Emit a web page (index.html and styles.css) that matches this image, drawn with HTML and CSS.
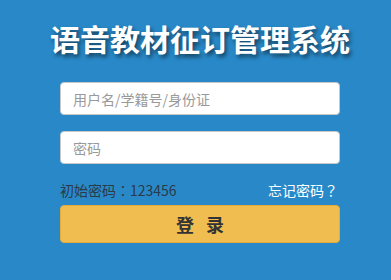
FILE: index.html
```html
<!DOCTYPE html>
<html lang="zh-CN">
<head>
<meta charset="utf-8">
<link rel="stylesheet" href="styles.css">
</head>
<body>
<div class="page">
  <h1 class="title">语音教材征订管理系统</h1>
  <form class="form">
    <input class="field" type="text" placeholder="用户名/学籍号/身份证">
    <input class="field" type="password" placeholder="密码">
    <div class="hint-row">
      <span class="hint">初始密码<span class="punct" lang="zh-TW">：</span>123456</span>
      <a class="forgot" href="#">忘记密码<span class="punct" lang="zh-TW">？</span></a>
    </div>
    <button class="login" type="button">登 录</button>
  </form>
</div>
</body>
</html>
```

FILE: styles.css
```css
html, body {
  margin: 0;
  padding: 0;
  height: 100%;
  background: #2989c8;
  font-family: "Noto Sans CJK SC", "Noto Sans", sans-serif;
}
.page {
  width: 280px;
  margin-left: 60px;
  padding-top: 16px;
}
.title {
  margin: 0 -30px;
  text-align: center;
  font-size: 30px;
  line-height: 44px;
  font-weight: bold;
  color: #fff;
  text-shadow: 2px 3px 4px rgba(0, 0, 0, 0.55);
}
.form {
  margin-top: 22px;
  display: flex;
  flex-direction: column;
}
.field {
  box-sizing: border-box;
  width: 280px;
  height: 33px;
  margin: 0 0 16px 0;
  padding: 0 12px;
  border: 1px solid #c8c8c8;
  border-radius: 4px;
  background: #fff;
  font-family: inherit;
  font-size: 14px;
  color: #333;
  outline: none;
}
.field::placeholder {
  color: #999;
}
.hint-row {
  margin-top: -1px;
  display: flex;
  justify-content: space-between;
  align-items: center;
  height: 22px;
  font-size: 14px;
  line-height: 22px;
}
.hint {
  color: #2b3a48;
}
.punct {
  font-family: "Noto Sans CJK TC", "Noto Sans CJK JP", sans-serif;
}
.forgot {
  color: #fff;
  text-decoration: none;
  margin-right: 2px;
}
.login {
  box-sizing: border-box;
  margin-top: 4px;
  width: 280px;
  height: 38px;
  border: 1px solid #e3ab3c;
  border-radius: 4px;
  background: #f0bd50;
  color: #333;
  font-family: inherit;
  font-size: 18px;
  font-weight: bold;
  letter-spacing: 4px;
  padding: 0 0 0 4px;
}
```
